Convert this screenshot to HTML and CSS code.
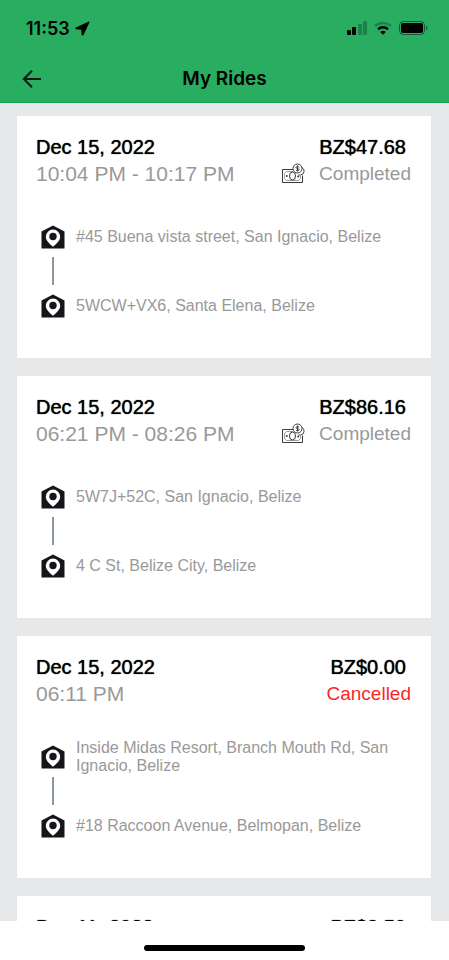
FILE: index.html
```html
<!DOCTYPE html>
<html lang="en">
<head>
<meta charset="utf-8">
<meta name="viewport" content="width=device-width, initial-scale=1">
<title>My Rides</title>
<link rel="stylesheet" href="styles.css">
</head>
<body>
<svg class="defs" aria-hidden="true">
  <symbol id="stop" viewBox="0 0 24 24">
    <path fill="#14161a" d="M12 0.500 23.500 6.500V23.500H0.500V6.500z"/>
    <path fill="#fff" d="M12 4.600a7.200 7.200 0 0 0-7.200 7.100c0 4.200 4.200 7.300 7.200 10.100 3-2.800 7.200-5.900 7.200-10.100a7.200 7.200 0 0 0-7.200-7.100z"/>
    <circle cx="12" cy="11.500" r="3.700" fill="#14161a"/>
  </symbol>
  <symbol id="cash" viewBox="0 0 24 22">
    <g fill="none" stroke="#3c3c3c" stroke-width="1">
      <path d="M12 6.500H1.500V19.500H21.500V12.500"/>
      <path stroke-width=".5" d="M12 8.500H5.500L3.500 10.500V15.500L5.500 17.500H17.500L19.500 15.500V13"/>
      <ellipse cx="11.500" cy="13" rx="3" ry="4"/>
      <path d="M21 4.500a4 4 0 0 1-1.500 7.500h-2"/>
      <circle cx="16.500" cy="5.500" r="4.500" fill="#fff"/>
      <path d="M18.200 4.200c-.6-.9-3.200-.9-3.200.4 0 1.300 3.200.7 3.200 2.100 0 1.200-2.700 1.200-3.300.1M16.500 2.500v6"/>
    </g>
    <circle cx="5.800" cy="13" r="1" fill="#3c3c3c"/>
    <circle cx="17.200" cy="13.500" r="1" fill="#3c3c3c"/>
  </symbol>
</svg>
<div class="screen">
  <header class="top">
    <div class="status">
      <div class="clock">
        <span>11:53</span>
        <svg width="15" height="15" viewBox="0 0 15 15" aria-hidden="true"><path d="M13.400.7.900 6.400c-.9.500-.6 1.900.4 1.900l4.900.4.400 5c.1 1.100 1.500 1.200 1.900.3L14.300 1.700c.3-.7-.2-1.300-.9-1z"/></svg>
      </div>
      <div class="signals">
        <svg width="20" height="14" viewBox="0 0 20 14" aria-hidden="true">
          <rect x="0" y="9" width="4" height="5" rx="1"/><rect x="5" y="6" width="4" height="8" rx="1"/>
          <g opacity=".25"><rect x="11" y="3" width="4" height="11" rx="1"/><rect x="16" y="0" width="4" height="14" rx="1"/></g>
        </svg>
        <svg width="18" height="14" viewBox="0 0 18 14" aria-hidden="true">
          <g fill="none" stroke="#000" stroke-width="2.400">
            <path opacity=".25" d="M1 5.200a11.500 11.500 0 0 1 16 0"/>
            <path d="M4 8.300a7.200 7.200 0 0 1 10 0"/>
          </g>
          <path d="M9 13.800 6.200 11a4 4 0 0 1 5.600 0z"/>
        </svg>
        <svg width="29" height="14" viewBox="0 0 29 14" aria-hidden="true">
          <rect x=".5" y=".5" width="25" height="13" rx="4" fill="none" stroke="#000" stroke-opacity=".5"/>
          <rect x="2" y="2" width="22" height="10" rx="2"/>
          <path opacity=".5" d="M27 5c2 .8 2 3.200 0 4z"/>
        </svg>
      </div>
    </div>
    <nav class="bar">
      <button class="back" type="button" aria-label="Back">
        <svg width="20" height="20" viewBox="0 0 20 20" aria-hidden="true"><path d="M19 10H2M10 1.800 1.800 10l8.200 8.200" fill="none" stroke="#0a1a10" stroke-width="2"/></svg>
      </button>
      <h1>My Rides</h1>
    </nav>
  </header>

  <main class="list">
    <article class="card">
      <div class="head">
        <div><h2>Dec 15, 2022</h2><p class="time">10:04 PM - 10:17 PM</p></div>
        <div class="right">
          <p class="price">BZ$47.68</p>
          <p class="state"><svg class="cash" aria-hidden="true"><use href="#cash"/></svg>Completed</p>
        </div>
      </div>
      <div class="route">
        <p class="stop"><svg aria-hidden="true"><use href="#stop"/></svg><span>#45 Buena vista street, San Ignacio, Belize</span></p>
        <div class="link"></div>
        <p class="stop"><svg aria-hidden="true"><use href="#stop"/></svg><span>5WCW+VX6, Santa Elena, Belize</span></p>
      </div>
    </article>

    <article class="card">
      <div class="head">
        <div><h2>Dec 15, 2022</h2><p class="time">06:21 PM - 08:26 PM</p></div>
        <div class="right">
          <p class="price">BZ$86.16</p>
          <p class="state"><svg class="cash" aria-hidden="true"><use href="#cash"/></svg>Completed</p>
        </div>
      </div>
      <div class="route">
        <p class="stop"><svg aria-hidden="true"><use href="#stop"/></svg><span>5W7J+52C, San Ignacio, Belize</span></p>
        <div class="link"></div>
        <p class="stop"><svg aria-hidden="true"><use href="#stop"/></svg><span>4 C St, Belize City, Belize</span></p>
      </div>
    </article>

    <article class="card">
      <div class="head">
        <div><h2>Dec 15, 2022</h2><p class="time">06:11 PM</p></div>
        <div class="right">
          <p class="price">BZ$0.00</p>
          <p class="state cancelled">Cancelled</p>
        </div>
      </div>
      <div class="route">
        <p class="stop"><svg aria-hidden="true"><use href="#stop"/></svg><span>Inside Midas Resort, Branch Mouth Rd, San Ignacio, Belize</span></p>
        <div class="link"></div>
        <p class="stop"><svg aria-hidden="true"><use href="#stop"/></svg><span>#18 Raccoon Avenue, Belmopan, Belize</span></p>
      </div>
    </article>

    <article class="card">
      <div class="head">
        <div><h2>Dec 11, 2022</h2></div>
        <div class="right"><p class="price">BZ$8.50</p></div>
      </div>
    </article>
  </main>

  <footer class="home"><div class="pill"></div></footer>
</div>
</body>
</html>
```
FILE: styles.css
```css
* { box-sizing: border-box; }
body, h1, h2, p { margin: 0; }
body {
  background: #fff;
  color: #000;
  font-family: "Liberation Sans", Arial, sans-serif;
}
svg { display: block; flex: none; }
.defs { position: absolute; width: 0; height: 0; }

.screen {
  display: flex;
  flex-direction: column;
  height: 100vh;
}

.top {
  background: #29ae61;
  border-bottom: 1px solid #12a150;
  font-family: Inter, sans-serif;
}
.status {
  display: flex;
  align-items: center;
  justify-content: space-between;
  height: 56px;
  padding: 0 21px 0 26px;
}
.clock {
  display: flex;
  align-items: center;
  gap: 5px;
  font-size: 18px;
  font-weight: 600;
}
.signals { display: flex; align-items: center; gap: 7px; }
.bar {
  display: grid;
  grid-template-columns: 48px 1fr 48px;
  align-items: center;
  height: 46px;
}
.back {
  padding: 0;
  margin-left: 22px;
  border: 0;
  background: none;
}
.bar h1 {
  font-size: 19px;
  font-weight: 600;
  line-height: 24px;
  text-align: center;
}

.list {
  display: flex;
  flex-direction: column;
  flex: 1;
  gap: 18px;
  min-height: 0;
  overflow: hidden;
  padding: 13px 18px 0 17px;
  background: #e7e8ea;
}
.card {
  flex: none;
  padding: 17px 20px 34px 19px;
  background: #fff;
}
.head { display: flex; justify-content: space-between; }
.head h2, .price {
  font-size: 20px;
  font-weight: 400;
  line-height: 28px;
  text-shadow: 0 0 1px #000;
}
.right { text-align: right; }
.price { padding-right: 5px; }
.time { color: #999; font-size: 21px; line-height: 26px; }
.state {
  display: flex;
  align-items: center;
  justify-content: flex-end;
  gap: 14px;
  color: #999;
  font-size: 19px;
  line-height: 26px;
}
.cancelled { color: #fc2525; }
.cash { width: 24px; height: 22px; }

.route { margin-top: 32px; padding: 0 10px 0 5px; }
.stop {
  display: flex;
  align-items: center;
  gap: 11px;
  min-height: 36px;
  color: #999;
  font-size: 16px;
  line-height: 18px;
}
.stop svg { width: 24px; height: 24px; }
.link {
  width: 2px;
  height: 28px;
  margin: 2px 0 3px 11px;
  background: #8b97a1;
}

.home {
  display: flex;
  justify-content: center;
  height: 39px;
  padding-top: 24px;
}
.pill {
  width: 36%;
  height: 6px;
  border-radius: 3px;
  background: #000;
}
```
